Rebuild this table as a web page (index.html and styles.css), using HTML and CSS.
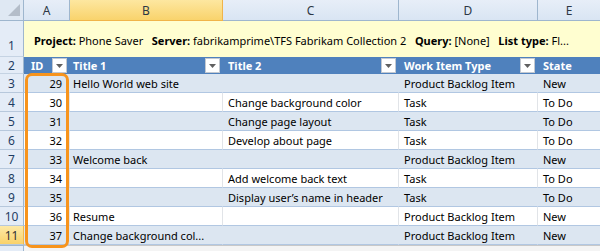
FILE: index.html
```html
<!DOCTYPE html>
<html>
<head>
<meta charset="utf-8">
<link rel="stylesheet" href="styles.css">
</head>
<body>
<div class="sheet">
  <div class="row colhdr">
    <div class="rh corner"><svg class="corner-tri" width="14" height="14" viewBox="0 0 14 14"><polygon points="13,1 13,13 1,13" fill="#b4bdc9"/></svg></div>
    <div class="ch w-a">A</div>
    <div class="ch w-b sel">B</div>
    <div class="ch w-c">C</div>
    <div class="ch w-d">D</div>
    <div class="ch w-e">E</div>
  </div>
  <div class="row r1">
    <div class="rh tall">1</div>
    <div class="info"><b>Project:</b> Phone Saver&nbsp;&nbsp;&nbsp;<b>Server:</b> fabrikamprime\TFS Fabrikam Collection 2&nbsp;&nbsp;&nbsp;<b>Query:</b> [None]&nbsp;&nbsp;&nbsp;<b>List type:</b> Fl...</div>
  </div>
  <div class="row r2">
    <div class="rh">2</div>
    <div class="th w-a pa">ID<span class="dd"><svg width="7" height="4" viewBox="0 0 7 4"><polygon points="0,0 7,0 3.5,4" fill="#606060"/></svg></span></div>
    <div class="th w-b pb">Title 1<span class="dd"><svg width="7" height="4" viewBox="0 0 7 4"><polygon points="0,0 7,0 3.5,4" fill="#606060"/></svg></span></div>
    <div class="th w-c pc">Title 2<span class="dd"><svg width="7" height="4" viewBox="0 0 7 4"><polygon points="0,0 7,0 3.5,4" fill="#606060"/></svg></span></div>
    <div class="th w-d pc">Work Item Type<span class="dd"><svg width="7" height="4" viewBox="0 0 7 4"><polygon points="0,0 7,0 3.5,4" fill="#606060"/></svg></span></div>
    <div class="th w-e pc">State</div>
  </div>

  <div class="row data band">
    <div class="rh">3</div>
    <div class="td w-a id">29</div><div class="td w-b pb">Hello World web site</div><div class="td w-c pc"></div><div class="td w-d pc">Product Backlog Item</div><div class="td w-e pc">New</div>
  </div>
  <div class="row data">
    <div class="rh">4</div>
    <div class="td w-a id">30</div><div class="td w-b pb"></div><div class="td w-c pc">Change background color</div><div class="td w-d pc">Task</div><div class="td w-e pc">To Do</div>
  </div>
  <div class="row data band">
    <div class="rh">5</div>
    <div class="td w-a id">31</div><div class="td w-b pb"></div><div class="td w-c pc">Change page layout</div><div class="td w-d pc">Task</div><div class="td w-e pc">To Do</div>
  </div>
  <div class="row data">
    <div class="rh">6</div>
    <div class="td w-a id">32</div><div class="td w-b pb"></div><div class="td w-c pc">Develop about page</div><div class="td w-d pc">Task</div><div class="td w-e pc">To Do</div>
  </div>
  <div class="row data band">
    <div class="rh">7</div>
    <div class="td w-a id">33</div><div class="td w-b pb">Welcome back</div><div class="td w-c pc"></div><div class="td w-d pc">Product Backlog Item</div><div class="td w-e pc">New</div>
  </div>
  <div class="row data">
    <div class="rh">8</div>
    <div class="td w-a id">34</div><div class="td w-b pb"></div><div class="td w-c pc">Add welcome back text</div><div class="td w-d pc">Task</div><div class="td w-e pc">To Do</div>
  </div>
  <div class="row data band">
    <div class="rh">9</div>
    <div class="td w-a id">35</div><div class="td w-b pb"></div><div class="td w-c pc">Display user’s name in header</div><div class="td w-d pc">Task</div><div class="td w-e pc">To Do</div>
  </div>
  <div class="row data">
    <div class="rh">10</div>
    <div class="td w-a id">36</div><div class="td w-b pb">Resume</div><div class="td w-c pc"></div><div class="td w-d pc">Product Backlog Item</div><div class="td w-e pc">New</div>
  </div>
  <div class="row data band">
    <div class="rh active">11</div>
    <div class="td w-a id">37</div><div class="td w-b pb">Change background col...</div><div class="td w-c pc"></div><div class="td w-d pc">Product Backlog Item</div><div class="td w-e pc">New</div>
  </div>
  <div class="row tail">
    <div class="rh tailrh"></div>
    <div class="tailfill"></div>
  </div>

  <div class="highlight"></div>
</div>
</body>
</html>
```

FILE: styles.css
```css
* { box-sizing: border-box; }
html, body { margin: 0; padding: 0; background: #ffffff; }
body {
  font-family: "Noto Sans", "Open Sans", sans-serif;
  font-size: 11px;
  color: #000;
  width: 600px;
  height: 251px;
  overflow: hidden;
}
.sheet { position: relative; width: 600px; }
.row { display: flex; }
.w-a { width: 46px; flex: none; }
.w-b { width: 153px; flex: none; }
.w-c { width: 176px; flex: none; }
.w-d { width: 139px; flex: none; }
.w-e { width: 62px; flex: none; }

/* row headers */
.rh {
  width: 24px;
  flex: none;
  background: #e4ecf7;
  border-right: 1px solid #9eb6ce;
  border-bottom: 1px solid #c5d3e3;
  color: #1f3d63;
  font-size: 12px;
  display: flex;
  align-items: center;
  justify-content: center;
}
.rh.tall { align-items: flex-end; padding-bottom: 2px; }
.rh.active {
  background: linear-gradient(#fde9a6, #f9d26b);
  border-right: 1px solid #f2b84a;
  border-bottom: 1px solid #f2b84a;
  color: #333;
}

/* column header */
.colhdr { height: 21px; }
.colhdr .rh { border-bottom: 1px solid #9eb6ce; }
.corner { position: relative; background: #dfe8f3; }
.corner-tri { position: absolute; right: 2px; bottom: 3px; }
.ch {
  height: 21px;
  background: linear-gradient(#e7eef8, #d9e5f3);
  border-right: 1px solid #9eb6ce;
  border-bottom: 1px solid #9eb6ce;
  color: #2c3744;
  font-size: 12px;
  display: flex;
  align-items: center;
  justify-content: center;
}
.ch.sel {
  background: linear-gradient(#fde7a0, #f9d36c);
  border-right: 1px solid #f0b44a;
  border-bottom: 1px solid #f0b44a;
}
.ch.w-e { border-right: none; }

/* row 1 */
.r1 { height: 36px; }
.info {
  flex: 1;
  background: #fffed0;
  padding: 12px 0 0 10px;
  white-space: nowrap;
  overflow: hidden;
  color: #000;
}
.info b { font-weight: 700; }

/* row 2 table header */
.r2 { height: 17px; }
.th {
  background: #4f81bd;
  color: #fff;
  font-weight: 700;
  display: flex;
  align-items: center;
  position: relative;
  white-space: nowrap;
}
.pa { padding-left: 7px; }
.pb { padding-left: 3px; }
.pc { padding-left: 5px; }
.dd {
  position: absolute;
  right: 3px;
  top: 1px;
  width: 15px;
  height: 15px;
  background: #fff;
  border: 1px solid #c3c9d1;
  display: flex;
  align-items: center;
  justify-content: center;
}

/* data rows */
.data { height: 19px; }
.td {
  background: #fff;
  border-bottom: 1px solid #b1c7e2;
  border-right: 1px solid #e1e4e8;
  display: flex;
  align-items: center;
  white-space: nowrap;
  overflow: hidden;
}
.data .rh { border-bottom: 1px solid #b7c8dc; }
.band .td { background: #dce6f1; border-right-color: #dce6f1; }
.td.w-e { border-right: none; }
.td.id { justify-content: flex-end; padding-right: 7px; }

.tail { height: 6px; }
.tailrh { background: #e4ecf7; border-top: 1px solid #9eb6ce; border-bottom: none; }
.tailfill { flex: 1; background: #f4f4f4; border-top: 1px solid #c8c8c8; }

.highlight {
  position: absolute;
  left: 25px;
  top: 73px;
  width: 44px;
  height: 175px;
  border: 3px solid #f7941d;
  border-radius: 7px;
}
```
